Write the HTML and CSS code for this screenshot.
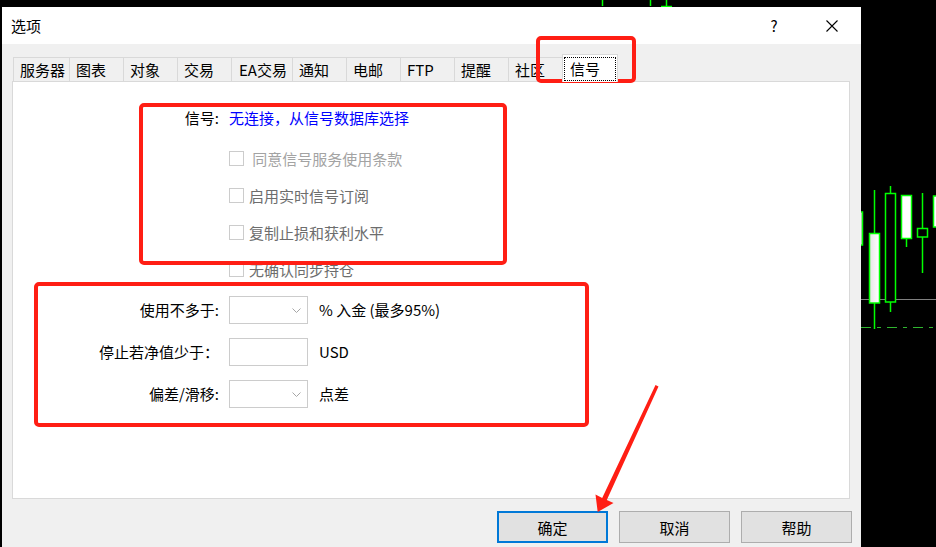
FILE: index.html
```html
<!DOCTYPE html>
<html lang="zh-CN">
<head>
    <meta charset="UTF-8">
    <title>选项</title>
    <link rel="stylesheet" href="styles.css">
</head>
<body>
    <!-- график за окном -->
    <svg class="chart" width="936" height="547" viewBox="0 0 936 547">
        <g stroke="#00ff00" stroke-width="1.5">
            <line x1="602.5" y1="0" x2="602.5" y2="6"/>
            <line x1="650.5" y1="0" x2="650.5" y2="6"/>
            <line x1="666.5" y1="0" x2="666.5" y2="6"/>
            <line x1="661" y1="6.5" x2="672" y2="6.5"/>
        </g>
        <line x1="861" y1="299.5" x2="936" y2="299.5" stroke="#808080" stroke-width="1"/>
        <line x1="861" y1="327.5" x2="936" y2="327.5" stroke="#2fb52f" stroke-width="1" stroke-dasharray="10 6 4 6"/>
        <defs>
            <linearGradient id="bull" x1="0" y1="0" x2="1" y2="0">
                <stop offset="0" stop-color="#e6e6e6"/>
                <stop offset="1" stop-color="#ffffff"/>
            </linearGradient>
        </defs>
        <g stroke="#00ff00" stroke-width="1.5">
            <rect x="856" y="212" width="6.5" height="33" fill="#cfcfcf"/>
            <line x1="874.5" y1="190" x2="874.5" y2="329"/>
            <rect x="869.5" y="233.5" width="10" height="69.5" fill="url(#bull)"/>
            <line x1="890.5" y1="186" x2="890.5" y2="312"/>
            <rect x="885.5" y="193.5" width="10" height="108.5" fill="#000"/>
            <line x1="906.5" y1="238" x2="906.5" y2="247"/>
            <rect x="901.5" y="195.5" width="10" height="43" fill="#fff"/>
            <line x1="922.5" y1="193" x2="922.5" y2="273"/>
            <rect x="917.5" y="228.5" width="10" height="8.5" fill="#000"/>
            <rect x="933.5" y="196" width="10" height="31" fill="#fff"/>
        </g>
    </svg>

    <div class="dialog">
        <div class="titlebar">
            <span class="title">选项</span>
            <span class="title-btn">?</span>
            <span class="title-btn">
                <svg width="12" height="12" viewBox="0 0 12 12">
                    <path d="M0.5 0.5 L11.5 11.5 M11.5 0.5 L0.5 11.5" stroke="#000" stroke-width="1.1" fill="none"/>
                </svg>
            </span>
        </div>

        <div class="dialog-body">
            <div class="tabs">
                <div class="tab tab-wide">服务器</div>
                <div class="tab">图表</div>
                <div class="tab">对象</div>
                <div class="tab">交易</div>
                <div class="tab tab-ea">EA交易</div>
                <div class="tab">通知</div>
                <div class="tab">电邮</div>
                <div class="tab">FTP</div>
                <div class="tab">提醒</div>
                <div class="tab">社区</div>
                <div class="tab active"><span class="focus">信号</span></div>
            </div>

            <div class="panel">
                <div class="signal-row">
                    <span class="label">信号:</span>
                    <span class="link">无连接，从信号数据库选择</span>
                </div>

                <div class="checks">
                    <div class="check light"><span class="box"></span>&nbsp;同意信号服务使用条款</div>
                    <div class="check"><span class="box"></span>启用实时信号订阅</div>
                    <div class="check"><span class="box"></span>复制止损和获利水平</div>
                    <div class="check"><span class="box"></span>无确认同步持仓</div>
                </div>

                <div class="form">
                    <div class="form-row">
                        <span class="label">使用不多于:</span>
                        <div class="combo">
                            <svg width="9" height="5" viewBox="0 0 9 5"><path d="M0.5 0.5 L4.5 4.5 L8.5 0.5" stroke="#a6a6a6" fill="none"/></svg>
                        </div>
                        <span class="unit">% 入金 (最多95%)</span>
                    </div>
                    <div class="form-row">
                        <span class="label">停止若净值少于：</span>
                        <div class="field"></div>
                        <span class="unit">USD</span>
                    </div>
                    <div class="form-row">
                        <span class="label">偏差/滑移:</span>
                        <div class="combo">
                            <svg width="9" height="5" viewBox="0 0 9 5"><path d="M0.5 0.5 L4.5 4.5 L8.5 0.5" stroke="#a6a6a6" fill="none"/></svg>
                        </div>
                        <span class="unit">点差</span>
                    </div>
                </div>
            </div>

            <div class="buttons">
                <button class="btn btn-default">确定</button>
                <button class="btn">取消</button>
                <button class="btn">帮助</button>
            </div>
        </div>
    </div>

    <!-- красные пометки -->
    <div class="mark mark-tab"></div>
    <div class="mark mark-signal"></div>
    <div class="mark mark-risk"></div>
    <svg class="arrow" width="936" height="547" viewBox="0 0 936 547">
        <polygon points="655.5,385 658.5,386.5 606.8,500.1 613.5,503 597.7,512 595.5,494.5 602.2,497.9" fill="#ff1e14"/>
    </svg>
</body>
</html>
```

FILE: styles.css
```css
* {
    box-sizing: border-box;
}
body {
    margin: 0;
    width: 936px;
    height: 547px;
    overflow: hidden;
    position: relative;
    background-color: #000;
    color: #000;
    font-family: "Noto Sans CJK SC", "Microsoft YaHei", sans-serif;
    font-size: 15px;
    line-height: 20px;
}
.chart {
    position: absolute;
    left: 0;
    top: 0;
}
.dialog {
    position: relative;
    margin: 7px 0 0 2px;
    width: 859px;
    height: 540px;
    background-color: #f0f0f0;
}
.titlebar {
    height: 37px;
    background-color: #fff;
    display: flex;
    align-items: center;
}
.title {
    flex: 1;
    padding-left: 9px;
}
.title-btn {
    width: 58px;
    height: 37px;
    display: flex;
    align-items: center;
    justify-content: center;
}
.dialog-body {
    padding: 10px 11px 0 10px;
}
.tabs {
    display: flex;
    align-items: flex-end;
    height: 27px;
    margin-left: 1px;
}
.tab {
    width: 55px;
    height: 24px;
    margin-right: -1px;
    padding-left: 6px;
    border: 1px solid #d9d9d9;
    border-bottom: none;
    background-color: #f0f0f0;
    display: flex;
    align-items: center;
    white-space: nowrap;
}
.tab-wide {
    width: 57px;
}
.tab-ea {
    width: 62px;
    padding-left: 7px;
}
.tab.active {
    width: 56px;
    height: 28px;
    margin-bottom: -1px;
    padding: 2px 1px 1px 1px;
    background-color: #fff;
    position: relative;
    z-index: 1;
}
.focus {
    flex: 1;
    height: 100%;
    border: 1px dotted #000;
    padding-left: 5px;
    display: flex;
    align-items: center;
}
.panel {
    height: 418px;
    border: 1px solid #d9d9d9;
    background-color: #fff;
    padding-top: 25px;
}
.label {
    width: 206px;
    margin-right: 10px;
    text-align: right;
    white-space: nowrap;
}
.signal-row {
    height: 22px;
    display: flex;
    align-items: center;
}
.link {
    color: #0000ff;
}
.checks {
    margin-top: 11px;
    padding-left: 216px;
}
.check {
    height: 37px;
    display: flex;
    align-items: center;
    color: #6d6d6d;
}
.check.light {
    color: #a3a3a3;
}
.box {
    width: 15px;
    height: 15px;
    margin-right: 5px;
    border: 1px solid #cccccc;
    background-color: #fff;
}
.form {
    margin-top: 8px;
    display: flex;
    flex-direction: column;
    gap: 14px;
}
.form-row {
    height: 28px;
    display: flex;
    align-items: center;
}
.combo,
.field {
    width: 79px;
    height: 28px;
    border: 1px solid #cccccc;
    background-color: #fff;
}
.combo {
    display: flex;
    align-items: center;
    justify-content: flex-end;
    padding-right: 6px;
}
.unit {
    margin-left: 11px;
}
.buttons {
    display: flex;
    justify-content: flex-end;
    gap: 11px;
    margin-top: 12px;
    margin-right: -2px;
}
.btn {
    width: 111px;
    height: 32px;
    border: 1px solid #adadad;
    background-color: #e1e1e1;
    font-family: inherit;
    font-size: 15px;
    color: #000;
    padding: 0;
}
.btn-default {
    border: 2px solid #0078d7;
}
.mark {
    position: absolute;
    border: 4px solid #ff1e14;
    border-radius: 5px;
}
.mark-tab {
    left: 536px;
    top: 36px;
    width: 100px;
    height: 47px;
}
.mark-signal {
    left: 139px;
    top: 103px;
    width: 368px;
    height: 162px;
}
.mark-risk {
    left: 34px;
    top: 282px;
    width: 555px;
    height: 145px;
}
.arrow {
    position: absolute;
    left: 0;
    top: 0;
    pointer-events: none;
}
```
